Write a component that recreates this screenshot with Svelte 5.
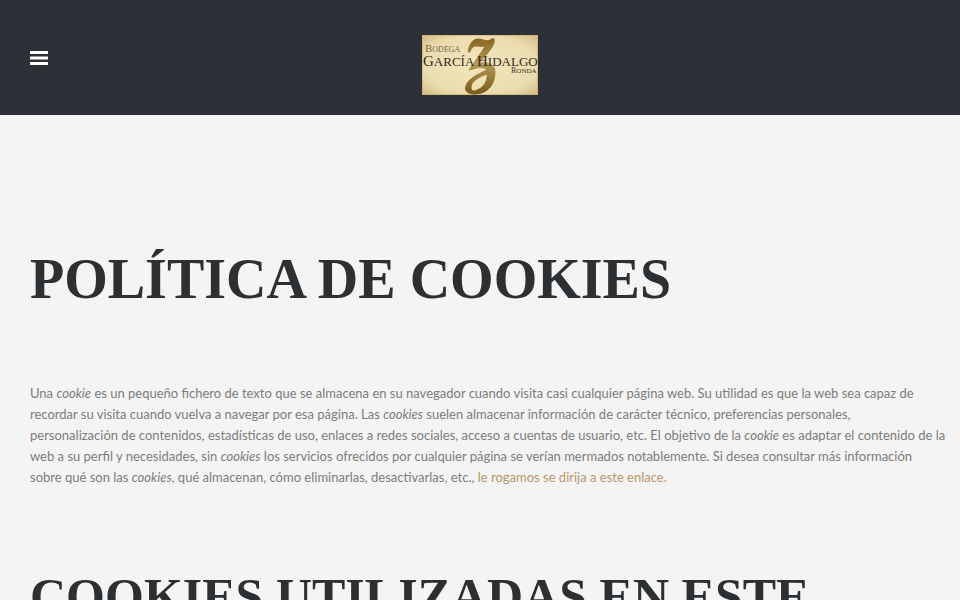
<script lang="ts">
	let menuOpen = false;
</script>

<svelte:head>
	<title>Política de cookies - Bodega García Hidalgo</title>
</svelte:head>

<header class="site-header">
	<button
		class="menu-toggle"
		type="button"
		aria-label="Menú"
		aria-expanded={menuOpen}
		on:click={() => (menuOpen = !menuOpen)}
	>
		<svg width="18" height="14" viewBox="0 0 18 14" aria-hidden="true">
			<rect width="18" height="3" rx="0.5" />
			<rect y="5.5" width="18" height="3" rx="0.5" />
			<rect y="11" width="18" height="3" rx="0.5" />
		</svg>
	</button>

	<a class="logo" href="/" aria-label="Bodega García Hidalgo">
		<svg width="116" height="60" viewBox="0 0 116 60">
			<defs>
				<radialGradient id="paper" cx="50%" cy="50%" r="70%">
					<stop offset="0" stop-color="#f3e5bd" />
					<stop offset="0.7" stop-color="#ebdcb0" />
					<stop offset="1" stop-color="#d3bc84" />
				</radialGradient>
				<linearGradient id="gold" x1="0" y1="0" x2="0" y2="1">
					<stop offset="0" stop-color="#876620" />
					<stop offset="0.45" stop-color="#b39a58" />
					<stop offset="1" stop-color="#785a17" />
				</linearGradient>
			</defs>
			<rect width="116" height="60" fill="url(#paper)" />
			<rect x="0.5" y="0.5" width="115" height="59" fill="none" stroke="#c8ad70" stroke-opacity="0.6" />
			<path
				fill="url(#gold)"
				stroke="url(#gold)"
				stroke-width="1"
				fill-rule="evenodd"
				d="M46 17C47 9 51 4 56 4C61 4 64 7 68 5C70 4 71 3 72 4C73 9 69 14 65 19L57 28C66 27 73 29 73 37C73 50 65 59 53 59C46 59 42 56 44 51C46 44 54 40 65 35C62 32 57 32 51 34L47 35L58 19C61 15 62 13 63 11C59 12 57 11 53 11C50 12 49 14 48 17ZM65 39C56 42 49 47 49 52C49 56 52 57 55 55C61 53 66 46 65 39Z"
			/>
			<text class="logo-small" x="3" y="17">B<tspan class="logo-tiny">ODEGA</tspan></text>
			<text class="logo-name" x="1" y="31">G<tspan class="logo-caps">ARCÍA</tspan></text>
			<text class="logo-name" x="55" y="31">H<tspan class="logo-caps">IDALGO</tspan></text>
			<text class="logo-small dark" x="89" y="38">R<tspan class="logo-tiny">ONDA</tspan></text>
		</svg>
	</a>
</header>

<main class="content">
	<h1>Política de cookies</h1>

	<p>
		Una <em>cookie</em> es un pequeño fichero de texto que se almacena en su navegador cuando visita
		casi cualquier página web. Su utilidad es que la web sea capaz de<br />
		recordar su visita cuando vuelva a navegar por esa página. Las <em>cookies</em> suelen almacenar
		información de carácter técnico, preferencias personales,<br />
		personalización de contenidos, estadísticas de uso, enlaces a redes sociales, acceso a cuentas de
		usuario, etc. El objetivo de la <em>cookie</em> es adaptar el contenido de la<br />
		web a su perfil y necesidades, sin <em>cookies</em> los servicios ofrecidos por cualquier página
		se verían mermados notablemente. Si desea consultar más información<br />
		sobre qué son las <em>cookies</em>, qué almacenan, cómo eliminarlas, desactivarlas, etc.,
		<a href="/cookies">le rogamos se dirija a este enlace.</a>
	</p>

	<h2>Cookies utilizadas en este</h2>
</main>

<style>
	:global(body) {
		margin: 0;
		background: #f4f4f4;
		color: #7c7c7c;
		font-family: Lato, 'Liberation Sans', sans-serif;
		height: 100vh;
		overflow: hidden;
	}

	.site-header {
		display: grid;
		grid-template-columns: 1fr auto 1fr;
		align-items: center;
		padding: 35px 30px 20px;
		background: #2c3037;
	}

	.menu-toggle {
		justify-self: start;
		align-self: start;
		display: flex;
		padding: 16px 0;
		border: 0;
		background: none;
		cursor: pointer;
	}

	.menu-toggle svg {
		fill: #fff;
	}

	.logo,
	.logo svg {
		display: block;
	}

	.logo text {
		font-family: 'Liberation Serif', serif;
		fill: #332b1c;
	}

	.logo .logo-small {
		font-size: 11px;
		fill: #75664a;
	}

	.logo .dark {
		font-size: 8px;
		fill: #40341f;
	}

	.logo .logo-tiny {
		font-size: 8px;
	}

	.logo .dark .logo-tiny {
		font-size: 7px;
	}

	.logo .logo-name {
		font-size: 15px;
	}

	.logo .logo-caps {
		font-size: 13px;
	}

	.content {
		padding: 122px 10px 0 30px;
	}

	h1,
	h2 {
		margin: 0;
		color: #2c3033;
		font-family: 'Liberation Serif', serif;
		font-size: 56px;
		font-weight: 700;
		line-height: 84px;
		text-transform: uppercase;
	}

	h2 {
		font-size: 50px;
	}

	p {
		margin: 62px 0 66px;
		font-size: 13px;
		line-height: 21px;
	}

	p a {
		color: #b8976b;
		text-decoration: none;
	}
</style>
